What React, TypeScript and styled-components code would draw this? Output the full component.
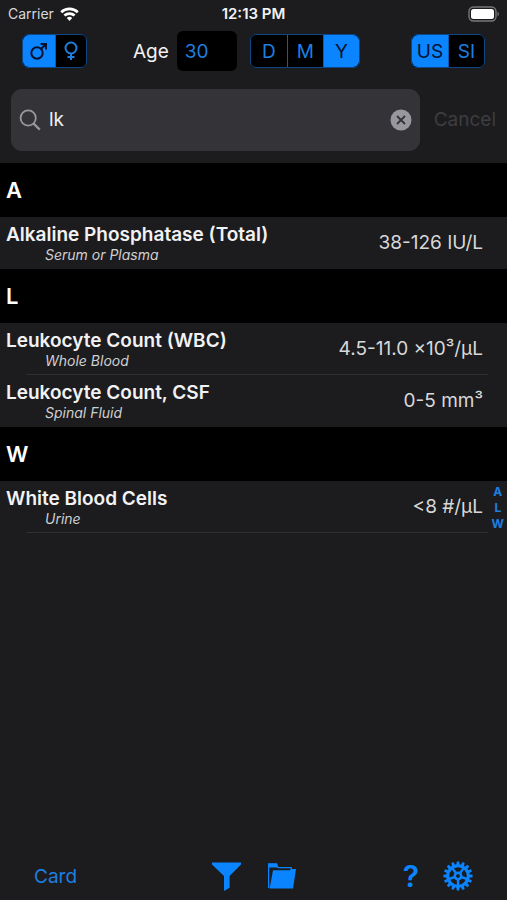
import React, { useState } from "react";
import styled, { createGlobalStyle } from "styled-components";

const blue = "#0a84ff";
const textBlue = "#1d7fe0";

const GlobalStyle = createGlobalStyle`
  * { box-sizing: border-box; }
  body {
    margin: 0;
    background: #1c1c1e;
    color: #f2f2f4;
    font-family: Inter, "Liberation Sans", sans-serif;
  }
  button, input { font: inherit; color: inherit; }
  button { border: 0; padding: 0; background: none; cursor: pointer; }
`;

const Screen = styled.div`
  display: flex;
  flex-direction: column;
  min-height: 100vh;
`;

const StatusBar = styled.header`
  display: grid;
  grid-template-columns: 1fr auto 1fr;
  align-items: center;
  height: 28px;
  padding: 0 8px;
  font-size: 14px;
  line-height: 20px;
`;

const Carrier = styled.div`
  display: flex;
  align-items: center;
  gap: 6px;
  color: #d8d8da;
`;

const Clock = styled.time`
  font-size: 15px;
  font-weight: 600;
`;

const Battery = styled.svg`
  justify-self: end;
`;

const Controls = styled.div`
  display: flex;
  align-items: center;
  height: 46px;
  padding: 0 22px;
`;

const AgeField = styled.label`
  display: flex;
  align-items: center;
  gap: 8px;
  margin: 0 13px 0 46px;
  font-size: 19px;
`;

const AgeInput = styled.input`
  width: 60px;
  height: 40px;
  padding: 0 8px;
  border: 0;
  border-radius: 6px;
  background: #000;
  color: ${textBlue};
  font-size: 19px;
`;

const Segments = styled.fieldset<{ $last?: boolean }>`
  display: flex;
  height: 34px;
  margin: 0 0 0 ${(p) => (p.$last ? "auto" : "0")};
  padding: 0;
  border: 1px solid #0d4787;
  border-radius: 6px;
  background: #000;
  overflow: hidden;
`;

const Segment = styled.label<{ $width: number }>`
  display: flex;
  align-items: center;
  justify-content: center;
  width: ${(p) => p.$width}px;
  color: ${textBlue};
  font-size: 19px;
  cursor: pointer;

  & + & { border-left: 1px solid #0d5cb0; }
  &:has(input:checked) {
    background: ${blue};
    color: #04122c;
  }
`;

const HiddenRadio = styled.input`
  appearance: none;
  width: 0;
  height: 0;
  margin: 0;
`;

const SearchBar = styled.form`
  display: flex;
  align-items: center;
  gap: 14px;
  height: 89px;
  padding: 2px 11px 0;
`;

const SearchBox = styled.label`
  display: flex;
  flex: 1;
  align-items: center;
  gap: 8px;
  height: 62px;
  min-width: 0;
  padding: 0 8px;
  border-radius: 11px;
  background: #343438;
  color: #97979d;
`;

const SearchInput = styled.input`
  flex: 1;
  min-width: 0;
  padding: 0;
  border: 0;
  outline: 0;
  background: none;
  color: #f0f0f2;
  font-size: 19px;
`;

const IconButton = styled.button`
  display: flex;
  color: ${blue};
`;

const CancelButton = styled.button`
  color: #3d3d40;
  font-size: 19px;
`;

const Results = styled.main`
  position: relative;
  flex: 1;
`;

const SectionTitle = styled.h2`
  margin: 0;
  padding: 0 6px;
  background: #000;
  color: #fff;
  font-size: 22px;
  font-weight: 600;
  line-height: 54px;
`;

const Rows = styled.ul`
  margin: 0;
  padding: 0;
  list-style: none;
`;

const Row = styled.li<{ $divided: boolean }>`
  display: flex;
  align-items: center;
  justify-content: space-between;
  height: 52px;
  padding: 0 24px 0 6px;
  background: linear-gradient(#2f2f31, #2f2f31) 26px 100% / calc(100% - 45px)
    ${(p) => (p.$divided ? "1px" : "0")} no-repeat;
`;

const TestName = styled.div`
  font-size: 19px;
  font-weight: 600;
  line-height: 23px;
`;

const Specimen = styled.div`
  padding-left: 39px;
  color: #cfcfd1;
  font-size: 14px;
  font-style: italic;
  line-height: 17px;
`;

const Range = styled.div`
  color: #d8d8da;
  font-size: 19px;
  line-height: 24px;
  white-space: nowrap;
`;

const LetterIndex = styled.nav`
  position: absolute;
  inset: 0 3px 0 auto;
  display: flex;
  flex-direction: column;
  align-items: center;
  justify-content: center;
  pointer-events: none;
`;

const IndexLink = styled.a`
  color: ${textBlue};
  font-size: 12px;
  font-weight: 700;
  line-height: 16px;
  text-decoration: none;
  pointer-events: auto;
`;

const Toolbar = styled.footer`
  display: grid;
  grid-template-columns: 1fr auto 1fr;
  align-items: center;
  height: 48px;
  padding: 0 34px;
`;

const CardButton = styled.button`
  justify-self: start;
  color: ${textBlue};
  font-size: 19px;
`;

const ToolGroup = styled.div<{ $end?: boolean }>`
  display: flex;
  align-items: center;
  gap: ${(p) => (p.$end ? 24 : 27)}px;
  justify-self: ${(p) => (p.$end ? "end" : "center")};
`;

const HelpButton = styled.button`
  color: ${blue};
  font-size: 30px;
  font-weight: 600;
  line-height: 36px;
`;

const MaleIcon = () => (
  <svg width="18" height="18" viewBox="0 0 18 18" fill="none" stroke="currentColor" strokeWidth="2">
    <circle cx="7" cy="11" r="5.7" />
    <path d="M11 7 16 2M10.6 2H16v5.4" />
  </svg>
);

const FemaleIcon = () => (
  <svg width="16" height="20" viewBox="0 0 16 20" fill="none" stroke="currentColor" strokeWidth="2">
    <circle cx="8" cy="7" r="5.5" />
    <path d="M8 12.5V19M4.5 16h7" />
  </svg>
);

const WifiIcon = () => (
  <svg width="19" height="14" viewBox="0 0 19 14" fill="none" stroke="#fff" strokeWidth="2.7">
    <path d="M1.2 5.2a12 12 0 0 1 16.6 0M4.4 8.6a7.4 7.4 0 0 1 10.2 0" />
    <path d="M9.5 14 6.8 11.1a4 4 0 0 1 5.4 0Z" fill="#fff" stroke="none" />
  </svg>
);

const SearchIcon = () => (
  <svg width="22" height="22" viewBox="0 0 22 22" fill="none" stroke="currentColor" strokeWidth="1.8">
    <circle cx="9.2" cy="9" r="7.6" />
    <path d="m14.6 14.6 6.2 6" strokeWidth="2.2" />
  </svg>
);

const ClearIcon = () => (
  <svg width="22" height="22" viewBox="0 0 22 22">
    <circle cx="11" cy="11" r="10.5" fill="#97979d" />
    <path d="m7 7 8 8m0-8-8 8" stroke="#343438" strokeWidth="1.8" />
  </svg>
);

const FunnelIcon = () => (
  <svg width="29" height="29" viewBox="0 0 29 29" fill="currentColor">
    <path d="M0 .5h29v2L17.6 14v11.8L12 29V14L0 2.5Z" />
  </svg>
);

const FolderIcon = () => (
  <svg width="28" height="26" viewBox="0 0 28 26">
    <path d="M.6 25V.8h8L10 4.6h13.2V8" fill="none" stroke="currentColor" strokeWidth="1.2" />
    <path d="M.6.8h8L10 4.6H.6Z" fill="currentColor" />
    <path d="M5 7.2h16.8L23 6h5l-3 19.6H1.6Z" fill="currentColor" />
  </svg>
);

const teeth = Array.from({ length: 16 }, (_, i) => i * 22.5);
const spokes = [0, 72, 144, 216, 288];

const GearIcon = () => (
  <svg width="30" height="30" viewBox="-15 -15 30 30" fill="none" stroke="currentColor">
    <circle r="10.2" strokeWidth="3" />
    <circle r="3.2" strokeWidth="2.6" />
    {teeth.map((angle) => (
      <path key={angle} d="M-1.7-11-1.2-14.6h2.4l.5 3.6Z" fill="currentColor" stroke="none" transform={`rotate(${angle})`} />
    ))}
    {spokes.map((angle) => (
      <path key={angle} d="M4 0h6" strokeWidth="2.4" transform={`rotate(${angle + 18})`} />
    ))}
  </svg>
);

type Option = { value: string; label: React.ReactNode; width: number };

function SegmentedControl(props: { name: string; title: string; options: Option[]; initial: string; last?: boolean }) {
  const [value, setValue] = useState(props.initial);
  return (
    <Segments $last={props.last} aria-label={props.title}>
      {props.options.map((o) => (
        <Segment key={o.value} $width={o.width}>
          <HiddenRadio
            type="radio"
            name={props.name}
            aria-label={o.value}
            checked={value === o.value}
            onChange={() => setValue(o.value)}
          />
          {o.label}
        </Segment>
      ))}
    </Segments>
  );
}

const sections = [
  { letter: "A", tests: [{ name: "Alkaline Phosphatase (Total)", specimen: "Serum or Plasma", range: "38-126 IU/L" }] },
  {
    letter: "L",
    tests: [
      { name: "Leukocyte Count (WBC)", specimen: "Whole Blood", range: "4.5-11.0 ×10³/µL" },
      { name: "Leukocyte Count, CSF", specimen: "Spinal Fluid", range: "0-5 mm³" },
    ],
  },
  { letter: "W", tests: [{ name: "White Blood Cells", specimen: "Urine", range: "<8 #/µL" }] },
];

export default function App() {
  const [age, setAge] = useState("30");
  const [query, setQuery] = useState("lk");

  return (
    <Screen>
      <GlobalStyle />
      <StatusBar>
        <Carrier>
          Carrier
          <WifiIcon />
        </Carrier>
        <Clock>12:13 PM</Clock>
        <Battery width="32" height="16" viewBox="0 0 32 16">
          <rect x="2" y="1" width="27" height="14" rx="4.5" fill="none" stroke="#77777a" strokeWidth="1.4" />
          <rect x="4" y="3" width="23" height="10" rx="2.5" fill="#fff" />
          <path d="M30.5 5.5q3 2.5 0 5Z" fill="#77777a" />
        </Battery>
      </StatusBar>

      <Controls>
        <SegmentedControl
          name="sex"
          title="Sex"
          initial="Male"
          options={[
            { value: "Male", label: <MaleIcon />, width: 32 },
            { value: "Female", label: <FemaleIcon />, width: 31 },
          ]}
        />
        <AgeField>
          Age
          <AgeInput inputMode="numeric" value={age} onChange={(e) => setAge(e.target.value)} />
        </AgeField>
        <SegmentedControl
          name="age-unit"
          title="Age unit"
          initial="Years"
          options={[
            { value: "Days", label: "D", width: 36 },
            { value: "Months", label: "M", width: 36 },
            { value: "Years", label: "Y", width: 36 },
          ]}
        />
        <SegmentedControl
          name="system"
          title="Measurement system"
          initial="US"
          last
          options={[
            { value: "US", label: "US", width: 36 },
            { value: "SI", label: "SI", width: 36 },
          ]}
        />
      </Controls>

      <SearchBar role="search" onSubmit={(e) => e.preventDefault()}>
        <SearchBox>
          <SearchIcon />
          <SearchInput aria-label="Search tests" value={query} onChange={(e) => setQuery(e.target.value)} />
          <IconButton type="button" aria-label="Clear search" onClick={() => setQuery("")}>
            <ClearIcon />
          </IconButton>
        </SearchBox>
        <CancelButton type="button">Cancel</CancelButton>
      </SearchBar>

      <Results>
        {sections.map((section, s) => (
          <section key={section.letter} id={section.letter}>
            <SectionTitle>{section.letter}</SectionTitle>
            <Rows>
              {section.tests.map((test, i) => (
                <Row key={test.name} $divided={i < section.tests.length - 1 || s === sections.length - 1}>
                  <div>
                    <TestName>{test.name}</TestName>
                    <Specimen>{test.specimen}</Specimen>
                  </div>
                  <Range>{test.range}</Range>
                </Row>
              ))}
            </Rows>
          </section>
        ))}
        <LetterIndex aria-label="Sections">
          {sections.map((section) => (
            <IndexLink key={section.letter} href={`#${section.letter}`}>
              {section.letter}
            </IndexLink>
          ))}
        </LetterIndex>
      </Results>

      <Toolbar>
        <CardButton type="button">Card</CardButton>
        <ToolGroup>
          <IconButton type="button" aria-label="Filter">
            <FunnelIcon />
          </IconButton>
          <IconButton type="button" aria-label="Open folder">
            <FolderIcon />
          </IconButton>
        </ToolGroup>
        <ToolGroup $end>
          <HelpButton type="button">?</HelpButton>
          <IconButton type="button" aria-label="Settings">
            <GearIcon />
          </IconButton>
        </ToolGroup>
      </Toolbar>
    </Screen>
  );
}
